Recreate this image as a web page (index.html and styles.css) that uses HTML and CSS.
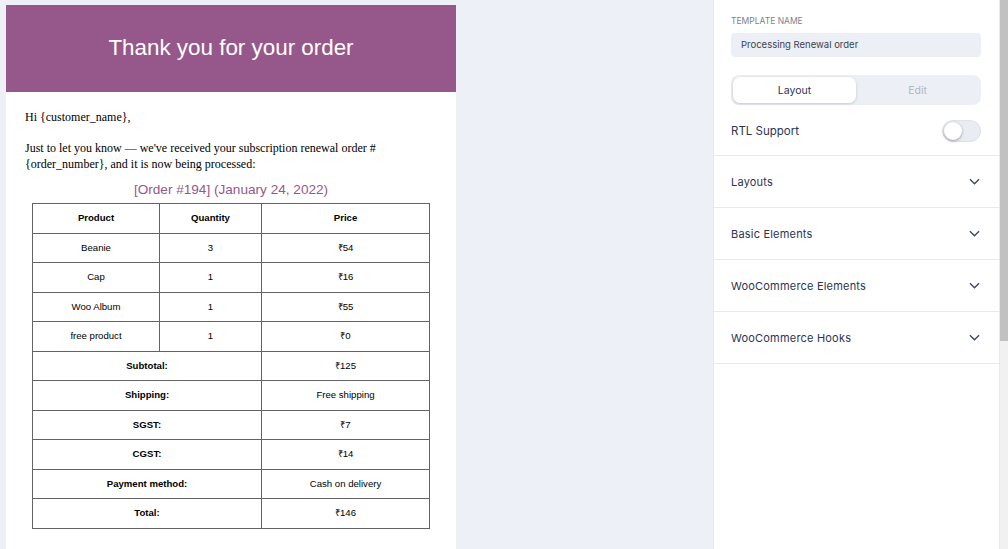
FILE: index.html
```html
<!DOCTYPE html>
<html lang="en">
<head>
    <meta charset="UTF-8">
    <title>Email Template Editor</title>
    <link rel="stylesheet" href="styles.css">
</head>
<body>
<div class="canvas">
    <div class="email">
        <div class="email-header">
            <h1>Thank you for your order</h1>
        </div>
        <div class="email-body">
            <p>Hi {customer_name},</p>
            <p>Just to let you know &mdash; we've received your subscription renewal order #<br>{order_number}, and it is now being processed:</p>
            <h2 class="order-title">[Order #194] (January 24, 2022)</h2>
            <table class="order-table">
                <tr>
                    <th class="col-product">Product</th>
                    <th class="col-qty">Quantity</th>
                    <th>Price</th>
                </tr>
                <tr><td>Beanie</td><td>3</td><td>&#8377;54</td></tr>
                <tr><td>Cap</td><td>1</td><td>&#8377;16</td></tr>
                <tr><td>Woo Album</td><td>1</td><td>&#8377;55</td></tr>
                <tr><td>free product</td><td>1</td><td>&#8377;0</td></tr>
                <tr><th colspan="2">Subtotal:</th><td>&#8377;125</td></tr>
                <tr><th colspan="2">Shipping:</th><td>Free shipping</td></tr>
                <tr><th colspan="2">SGST:</th><td>&#8377;7</td></tr>
                <tr><th colspan="2">CGST:</th><td>&#8377;14</td></tr>
                <tr><th colspan="2">Payment method:</th><td>Cash on delivery</td></tr>
                <tr><th colspan="2">Total:</th><td>&#8377;146</td></tr>
            </table>
        </div>
    </div>
</div>

<aside class="sidebar">
    <div class="settings">
        <label class="field-label">Template name</label>
        <div class="field-input">Processing Renewal order</div>

        <div class="tabs">
            <div class="tab active">Layout</div>
            <div class="tab">Edit</div>
        </div>

        <div class="rtl-row">
            <span>RTL Support</span>
            <div class="toggle"><div class="knob"></div></div>
        </div>
    </div>

    <div class="section">
        <span>Layouts</span>
        <svg class="chevron" viewBox="0 0 12 7"><path d="M1 1l5 5 5-5"/></svg>
    </div>
    <div class="section">
        <span>Basic Elements</span>
        <svg class="chevron" viewBox="0 0 12 7"><path d="M1 1l5 5 5-5"/></svg>
    </div>
    <div class="section">
        <span>WooCommerce Elements</span>
        <svg class="chevron" viewBox="0 0 12 7"><path d="M1 1l5 5 5-5"/></svg>
    </div>
    <div class="section">
        <span>WooCommerce Hooks</span>
        <svg class="chevron" viewBox="0 0 12 7"><path d="M1 1l5 5 5-5"/></svg>
    </div>
</aside>

<div class="scrollbar"><div class="thumb"></div></div>
</body>
</html>
```

FILE: styles.css
```css
body {
    margin: 0;
    display: flex;
    height: 549px;
    overflow: hidden;
    background-color: #edf0f6;
    font-family: Arial, "Liberation Sans", sans-serif;
}

.canvas {
    width: 713px;
    flex-shrink: 0;
    padding: 5px 0 0 6px;
    box-sizing: border-box;
}

.email {
    width: 450px;
    background-color: #ffffff;
    height: 560px;
}

.email-header {
    background-color: #96588a;
    height: 87px;
    display: flex;
    align-items: center;
    justify-content: center;
}

.email-header h1 {
    margin: 0 0 2px 0;
    color: #ffffff;
    font-family: "Liberation Sans", Arial, sans-serif;
    font-weight: normal;
    font-size: 22.4px;
}

.email-body {
    padding: 17px 0 0 19px;
    font-family: "Liberation Serif", "Times New Roman", serif;
    font-size: 12px;
    line-height: 16px;
    color: #000000;
}

.email-body p {
    margin: 0 0 15px 0;
}

.order-title {
    margin: -6px 0 5px 0;
    padding-right: 19px;
    text-align: center;
    font-family: "Liberation Sans", Arial, sans-serif;
    font-weight: normal;
    font-size: 13.6px;
    line-height: 17px;
    color: #96588a;
}

.order-table {
    margin-left: 7px;
    width: 398px;
    border-collapse: collapse;
    font-family: "Liberation Sans", Arial, sans-serif;
    font-size: 9.6px;
    color: #000000;
}

.order-table th,
.order-table td {
    border: 1px solid #636363;
    height: 28.5px;
    padding: 0;
    text-align: center;
}

.order-table th {
    font-weight: bold;
}

.col-product {
    width: 126px;
}

.col-qty {
    width: 101px;
}

.sidebar {
    width: 286px;
    flex-shrink: 0;
    background-color: #ffffff;
    border-left: 1px solid #e4e7ee;
    box-sizing: border-box;
    font-family: Inter, "Noto Sans", sans-serif;
    color: #2b3452;
}

.settings {
    padding: 15px 18px 0 17px;
    height: 156px;
    box-sizing: border-box;
    border-bottom: 1px solid #e6e9ef;
}

.field-label {
    display: block;
    font-size: 8.5px;
    text-transform: uppercase;
    color: #7d828f;
    line-height: 12px;
    margin-bottom: 6px;
}

.field-input {
    background-color: #eceff5;
    border-radius: 4px;
    height: 24px;
    line-height: 24px;
    padding-left: 10px;
    font-size: 9.5px;
    color: #3a3f4d;
}

.tabs {
    margin-top: 18px;
    display: flex;
    background-color: #eceff5;
    border-radius: 8px;
    padding: 2px;
    height: 30px;
    box-sizing: border-box;
}

.tab {
    flex: 1;
    display: flex;
    align-items: center;
    justify-content: center;
    font-size: 10.5px;
    color: #b3b7c1;
    border-radius: 7px;
}

.tab.active {
    background-color: #ffffff;
    color: #2b3452;
    box-shadow: 0 1px 3px rgba(30, 40, 70, 0.2);
}

.rtl-row {
    margin-top: 15px;
    display: flex;
    align-items: center;
    justify-content: space-between;
    font-size: 11.5px;
}

.toggle {
    width: 39px;
    height: 22px;
    border-radius: 11px;
    background-color: #e9ecf2;
    border: 1px solid #dde1e8;
    box-sizing: border-box;
    padding: 1px;
}

.knob {
    width: 18px;
    height: 18px;
    border-radius: 50%;
    background-color: #ffffff;
    box-shadow: 0 1px 3px rgba(0, 0, 0, 0.35);
}

.section {
    height: 52px;
    box-sizing: border-box;
    display: flex;
    align-items: center;
    justify-content: space-between;
    padding: 0 18px 0 17px;
    border-bottom: 1px solid #e6e9ef;
    font-size: 11px;
    letter-spacing: 0.2px;
}

.chevron {
    width: 11px;
    height: 7px;
    fill: none;
    stroke: #3a4560;
    stroke-width: 1.4;
    margin-right: 1px;
}

.scrollbar {
    width: 9px;
    flex-shrink: 0;
    background-color: #f1f1f1;
    border-left: 1px solid #e8e8e8;
    box-sizing: border-box;
}

.thumb {
    height: 341px;
    background-color: #c1c1c1;
}
```
